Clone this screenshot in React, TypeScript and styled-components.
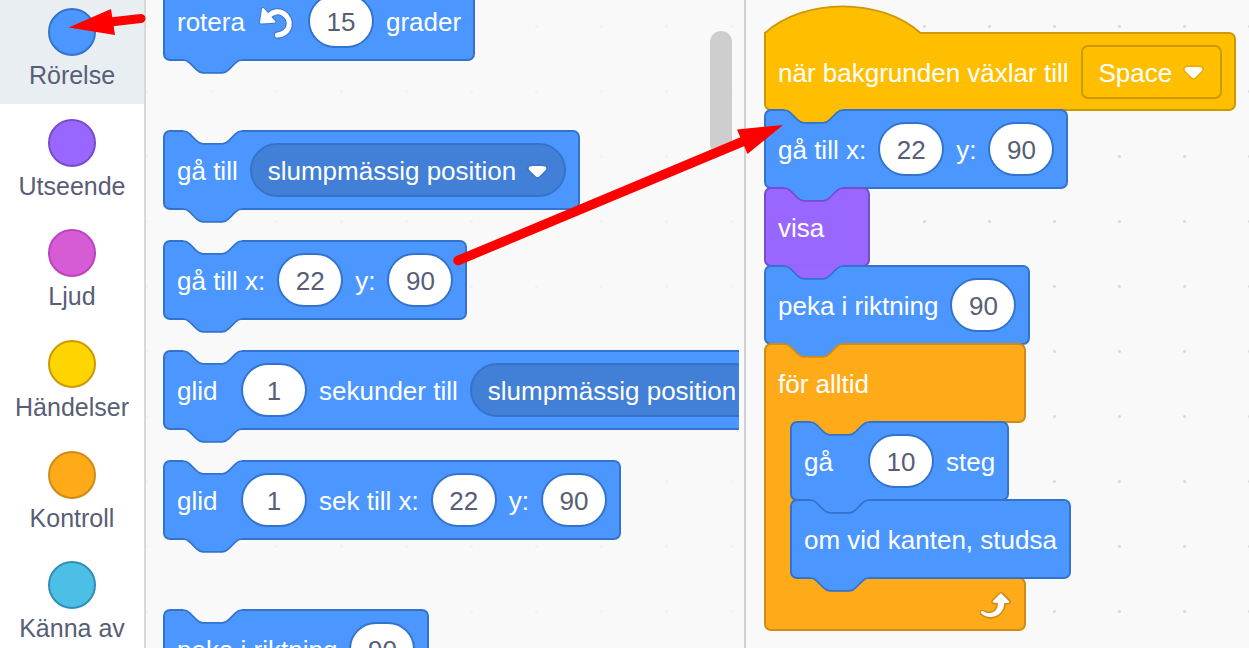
import React from "react";
import styled, { createGlobalStyle } from "styled-components";

const GlobalStyle = createGlobalStyle`
  *, *::before, *::after { box-sizing: border-box; }
  body {
    margin: 0;
    background: #f9f9f9;
    font-family: "Liberation Sans", Arial, Helvetica, sans-serif;
  }
  button, input, select { font-family: inherit; }
`;

type Tone = { fill: string; edge: string; field: string };

const motion: Tone = { fill: "#4c97ff", edge: "#3373cc", field: "#4280d7" };
const looks: Tone = { fill: "#9966ff", edge: "#774dcb", field: "#855cd6" };
const events: Tone = { fill: "#ffbf00", edge: "#cc9900", field: "#ffbf00" };
const control: Tone = { fill: "#ffab19", edge: "#cf8b17", field: "#ec9c13" };
const canvas = "#f9f9f9";

const Page = styled.div`
  position: relative;
  display: flex;
  height: 100vh;
  overflow: hidden;
`;

/* ---------- categories ---------- */

const Sidebar = styled.nav`
  flex: 0 0 146px;
  background: #ffffff;
  border-right: 2px solid #d9d9d9;
`;

const CategoryList = styled.div`
  display: grid;
  grid-template-rows: repeat(6, 1fr);
  height: 664px;
  margin-top: -7px;
`;

const Category = styled.button<{ $active?: boolean }>`
  display: flex;
  flex-direction: column;
  align-items: center;
  gap: 5px;
  padding: 15px 0 0;
  border: 0;
  background: ${(p) => (p.$active ? "#e9eef2" : "#ffffff")};
  color: #575e75;
  font-size: 25px;
  line-height: 29px;
  cursor: pointer;
`;

const Bubble = styled.span<{ $fill: string; $edge: string }>`
  width: 48px;
  height: 48px;
  border-radius: 50%;
  border: 2px solid ${(p) => p.$edge};
  background: ${(p) => p.$fill};
`;

const categories = [
  { name: "Rörelse", fill: "#4c97ff", edge: "#3373cc" },
  { name: "Utseende", fill: "#9966ff", edge: "#774dcb" },
  { name: "Ljud", fill: "#d65cd6", edge: "#bd42bd" },
  { name: "Händelser", fill: "#ffd500", edge: "#cc9900" },
  { name: "Kontroll", fill: "#ffab19", edge: "#cf8b17" },
  { name: "Känna av", fill: "#4cbfe6", edge: "#2e8eb8" },
];

/* ---------- panels ---------- */

const Palette = styled.section`
  position: relative;
  flex: 0 0 600px;
  min-width: 0;
  padding-right: 5px;
  border-right: 2px solid #d0d0d0;
  background: radial-gradient(circle, #f2f2f2 1px, transparent 2px) 33px 59px / 65px 65px ${canvas};
`;

const PaletteClip = styled.div`
  height: 100%;
  overflow: hidden;
  padding-left: 17px;
`;

const PaletteGroups = styled.div`
  display: flex;
  flex-direction: column;
  gap: 69px;
  margin-top: -19px;
`;

const PaletteGroup = styled.div`
  display: flex;
  flex-direction: column;
  align-items: flex-start;
  gap: 30px;
`;

const ScrollThumb = styled.div`
  position: absolute;
  top: 31px;
  right: 12px;
  width: 22px;
  height: 124px;
  border-radius: 11px;
  background: #cecece;
`;

const Workspace = styled.main`
  flex: 1 1 0;
  min-width: 0;
  overflow: hidden;
  padding: 32px 0 0 18px;
  background: radial-gradient(circle, #dadada 1px, transparent 2px) 16px 59px / 65px 65px ${canvas};
`;

/* ---------- blocks ---------- */

const Stack = styled.div`
  display: flex;
  flex-direction: column;
  align-items: flex-start;

  & > * + * {
    margin-top: -2px;
  }
`;

const Body = styled.div<{ $tone: Tone; $shape?: "hat" | "mouth" }>`
  position: relative;
  display: flex;
  align-items: center;
  gap: 12px;
  width: max-content;
  min-width: ${(p) => (p.$shape === "mouth" ? 262 : 106)}px;
  height: ${(p) => (p.$shape === "hat" ? 79 : 80)}px;
  padding: 0 12px;
  border: 2px solid ${(p) => p.$tone.edge};
  border-radius: ${(p) => (p.$shape === "hat" ? "0 7px 7px 7px" : p.$shape === "mouth" ? "7px 7px 7px 0" : "7px")};
  background: ${(p) => p.$tone.fill};
  color: #ffffff;
  font-size: 26px;
  line-height: 30px;
  white-space: nowrap;
`;

const Connector = styled.svg<{ $at: "top" | "bottom" }>`
  position: absolute;
  left: -2px;
  top: ${(p) => (p.$at === "top" ? "-2px" : "100%")};
  overflow: visible;
`;

const HatCurve = styled.svg`
  position: absolute;
  left: -2px;
  bottom: 100%;
  overflow: visible;
`;

const Word = styled.span<{ $lead?: boolean }>`
  min-width: ${(p) => (p.$lead ? "52px" : "0")};
  padding-top: 2px;
`;

const NumberField = styled.input<{ $edge: string }>`
  width: 66px;
  height: 54px;
  padding: 2px 0 0;
  border: 2px solid ${(p) => p.$edge};
  border-radius: 27px;
  background: #ffffff;
  color: #575e75;
  font-size: 26px;
  text-align: center;
`;

const MenuField = styled.span<{ $tone: Tone; $square?: boolean }>`
  display: flex;
  align-items: center;
  gap: 10px;
  height: 54px;
  padding: 2px 16px 0;
  border: 2px solid ${(p) => p.$tone.edge};
  border-radius: ${(p) => (p.$square ? "7px" : "27px")};
  background: ${(p) => p.$tone.field};
`;

const MenuSelect = styled.select`
  appearance: none;
  padding: 0;
  border: 0;
  background: transparent;
  color: #ffffff;
  font-size: 26px;
  line-height: 30px;
`;

const WAVE =
  "c3.2 0 4.9 1.6 6.5 3.2l6.5 6.5c1.6 1.6 3.2 3.2 6.5 3.2h19.4c3.2 0 4.9 -1.6 6.5 -3.2l6.5 -6.5c1.6 -1.6 3.2 -3.2 6.5 -3.2";

function Wave({ at, fill, edge }: { at: "top" | "bottom"; fill: string; edge: string }) {
  return (
    <Connector $at={at} width="80" height="16" aria-hidden="true">
      <path d={`M20.4 -0.2V1${WAVE}V-0.2Z`} fill={fill} />
      <path d={`M20.4 1${WAVE}`} fill="none" stroke={edge} strokeWidth="1.7" />
    </Connector>
  );
}

type BlockProps = {
  tone: Tone;
  above?: string;
  shape?: "hat" | "mouth";
  children: React.ReactNode;
};

function Block({ tone, above = canvas, shape, children }: BlockProps) {
  return (
    <Body $tone={tone} $shape={shape}>
      {shape === "hat" ? (
        <HatCurve width="158" height="27" aria-hidden="true">
          <path d="M2 28V26H1C41.5 -9.6 116 -9.6 156.5 26L154 28Z" fill={tone.fill} />
          <path d="M1 28V26C41.5 -9.6 116 -9.6 156.5 26" fill="none" stroke={tone.edge} strokeWidth="1.8" />
        </HatCurve>
      ) : (
        <Wave at="top" fill={above} edge={tone.edge} />
      )}
      {shape !== "mouth" && <Wave at="bottom" fill={tone.fill} edge={tone.edge} />}
      {children}
    </Body>
  );
}

function Num({ value, label }: { value: string; label: string }) {
  return <NumberField $edge={motion.edge} type="text" inputMode="numeric" defaultValue={value} aria-label={label} />;
}

function Menu({ value, label, tone, square }: { value: string; label: string; tone: Tone; square?: boolean }) {
  return (
    <MenuField $tone={tone} $square={square}>
      <MenuSelect aria-label={label} defaultValue={value}>
        <option>{value}</option>
      </MenuSelect>
      <svg width="21" height="15" viewBox="0 0 12.71 8.79" aria-hidden="true">
        <path
          d="M12.71,2.44A2.41,2.41,0,0,1,12,4.16L8.08,8.08a2.45,2.45,0,0,1-3.45,0L0.72,4.16A2.42,2.42,0,0,1,0,2.44,2.48,2.48,0,0,1,.71.71C1,0.47,1.43,0,6.36,0S11.75,0.46,12,.71A2.44,2.44,0,0,1,12.71,2.44Z"
          fill="#231f20"
          opacity="0.1"
        />
        <path
          d="M6.36,7.79a1.43,1.43,0,0,1-1-.42L1.42,3.45a1.44,1.44,0,0,1,0-2c0.56-.56,9.31-0.56,9.87,0a1.44,1.44,0,0,1,0,2L7.37,7.37A1.43,1.43,0,0,1,6.36,7.79Z"
          fill="#ffffff"
        />
      </svg>
    </MenuField>
  );
}

function RotateLeftIcon() {
  const arc = "M12 13.500C16 9.500 22 8.500 26.500 11.500C31 14.500 33 19.500 32 24C31 29 26 33 20.500 33";
  const head = "M6 7L4 20.500L17.500 19.800Z";
  return (
    <svg width="39" height="39" viewBox="0 0 39 39" aria-hidden="true" strokeLinecap="round" strokeLinejoin="round">
      <path d={arc} fill="none" stroke="#3d79cc" strokeWidth="7.500" />
      <path d={head} fill="#3d79cc" stroke="#3d79cc" strokeWidth="4" />
      <path d={arc} fill="none" stroke="#ffffff" strokeWidth="5.200" />
      <path d={head} fill="#ffffff" stroke="#ffffff" strokeWidth="2" />
    </svg>
  );
}

function RepeatIcon() {
  return (
    <svg width="39" height="39" viewBox="0 0 24 24" aria-hidden="true">
      <path
        fill="#cf8b17"
        d="M23.3,11c-0.3,0.6-0.9,1-1.5,1h-1.6c-0.1,1.3-0.5,2.5-1.1,3.6c-0.9,1.7-2.3,3.2-4.1,4.1c-1.7,0.9-3.6,1.2-5.5,0.9c-1.8-0.3-3.5-1.1-4.9-2.3c-0.7-0.7-0.7-1.9,0-2.6c0.6-0.6,1.6-0.7,2.3-0.2H7c0.9,0.6,1.9,0.9,2.9,0.9s1.9-0.3,2.7-0.9c1.1-0.8,1.8-2.1,1.8-3.5h-1.5c-0.9,0-1.7-0.7-1.7-1.7c0-0.4,0.2-0.9,0.5-1.2l4.4-4.4c0.7-0.6,1.7-0.6,2.4,0L23,9.2C23.5,9.7,23.6,10.4,23.3,11z"
      />
      <path
        fill="#ffffff"
        d="M21.8,11h-2.6c0,1.5-0.3,2.9-1,4.2c-0.8,1.6-2.1,2.8-3.7,3.6c-1.5,0.8-3.3,1.1-4.9,0.8c-1.6-0.2-3.2-1-4.4-2.1c-0.4-0.3-0.4-0.9-0.1-1.2c0.3-0.4,0.9-0.4,1.2-0.1l0,0c1,0.7,2.2,1.1,3.4,1.1s2.3-0.3,3.3-1c0.9-0.6,1.6-1.5,2-2.6c0.3-0.9,0.4-1.8,0.2-2.8h-2.4c-0.4,0-0.7-0.3-0.7-0.7c0-0.2,0.1-0.3,0.2-0.4l4.4-4.4c0.3-0.3,0.7-0.3,0.9,0L22,9.8c0.3,0.3,0.4,0.6,0.3,0.9S22,11,21.8,11z"
      />
    </svg>
  );
}

/* ---------- loop ---------- */

const LoopMiddle = styled.div`
  position: relative;
  z-index: 1;
  display: flex;
`;

const LoopSpine = styled.div`
  flex: 0 0 32px;
  margin-right: -6px;
  border-left: 2px solid ${control.edge};
  background: ${control.fill};
`;

const LoopInner = styled.div`
  position: relative;
`;

const LoopFoot = styled.div`
  position: relative;
  display: flex;
  align-items: center;
  justify-content: flex-end;
  width: 262px;
  height: 54px;
  padding-right: 12px;
  border: 2px solid ${control.edge};
  border-radius: 0 7px 7px 7px;
  background: ${control.fill};
`;

const Annotations = styled.svg`
  position: absolute;
  top: 0;
  left: 0;
  z-index: 2;
  pointer-events: none;
`;

export default function App() {
  return (
    <>
      <GlobalStyle />
      <Page>
        <Sidebar>
          <CategoryList>
            {categories.map((c, i) => (
              <Category key={c.name} type="button" $active={i === 0}>
                <Bubble $fill={c.fill} $edge={c.edge} />
                {c.name}
              </Category>
            ))}
          </CategoryList>
        </Sidebar>

        <Palette>
          <PaletteClip>
            <PaletteGroups>
              <PaletteGroup>
                <Block tone={motion}>
                  <Word>rotera</Word>
                  <RotateLeftIcon />
                  <Num value="15" label="grader" />
                  <Word>grader</Word>
                </Block>
              </PaletteGroup>
              <PaletteGroup>
                <Block tone={motion}>
                  <Word>gå till</Word>
                  <Menu value="slumpmässig position" label="gå till" tone={motion} />
                </Block>
                <Block tone={motion}>
                  <Word>gå till x:</Word>
                  <Num value="22" label="x" />
                  <Word>y:</Word>
                  <Num value="90" label="y" />
                </Block>
                <Block tone={motion}>
                  <Word $lead>glid</Word>
                  <Num value="1" label="sekunder" />
                  <Word>sekunder till</Word>
                  <Menu value="slumpmässig position" label="glid till" tone={motion} />
                </Block>
                <Block tone={motion}>
                  <Word $lead>glid</Word>
                  <Num value="1" label="sek" />
                  <Word>sek till x:</Word>
                  <Num value="22" label="x" />
                  <Word>y:</Word>
                  <Num value="90" label="y" />
                </Block>
              </PaletteGroup>
              <PaletteGroup>
                <Block tone={motion}>
                  <Word>peka i riktning</Word>
                  <Num value="90" label="riktning" />
                </Block>
              </PaletteGroup>
            </PaletteGroups>
          </PaletteClip>
          <ScrollThumb />
        </Palette>

        <Workspace>
          <Stack>
            <Block tone={events} shape="hat">
              <Word>när bakgrunden växlar till</Word>
              <Menu value="Space" label="bakgrund" tone={events} square />
            </Block>
            <Block tone={motion} above={events.fill}>
              <Word>gå till x:</Word>
              <Num value="22" label="x" />
              <Word>y:</Word>
              <Num value="90" label="y" />
            </Block>
            <Block tone={looks} above={motion.fill}>
              <Word>visa</Word>
            </Block>
            <Block tone={motion} above={looks.fill}>
              <Word>peka i riktning</Word>
              <Num value="90" label="riktning" />
            </Block>
            <Block tone={control} above={motion.fill} shape="mouth">
              <Word>för alltid</Word>
            </Block>
            <LoopMiddle>
              <LoopSpine />
              <LoopInner>
                <Stack>
                  <Block tone={motion} above={control.fill}>
                    <Word $lead>gå</Word>
                    <Num value="10" label="steg" />
                    <Word>steg</Word>
                  </Block>
                  <Block tone={motion} above={motion.fill}>
                    <Word>om vid kanten, studsa</Word>
                  </Block>
                </Stack>
              </LoopInner>
            </LoopMiddle>
            <LoopFoot>
              <RepeatIcon />
            </LoopFoot>
          </Stack>
        </Workspace>

        <Annotations width="800" height="280" aria-hidden="true">
          <g fill="#ff0000" stroke="#ff0000" strokeLinecap="round">
            <path d="M458 260.500L750 138.500" strokeWidth="9.500" />
            <path d="M783 125L737 129.500L747.500 154Z" stroke="none" />
            <path d="M141 18.500L110 22" strokeWidth="9" />
            <path d="M68.500 27.500L111 9L115 35Z" stroke="none" />
          </g>
        </Annotations>
      </Page>
    </>
  );
}
